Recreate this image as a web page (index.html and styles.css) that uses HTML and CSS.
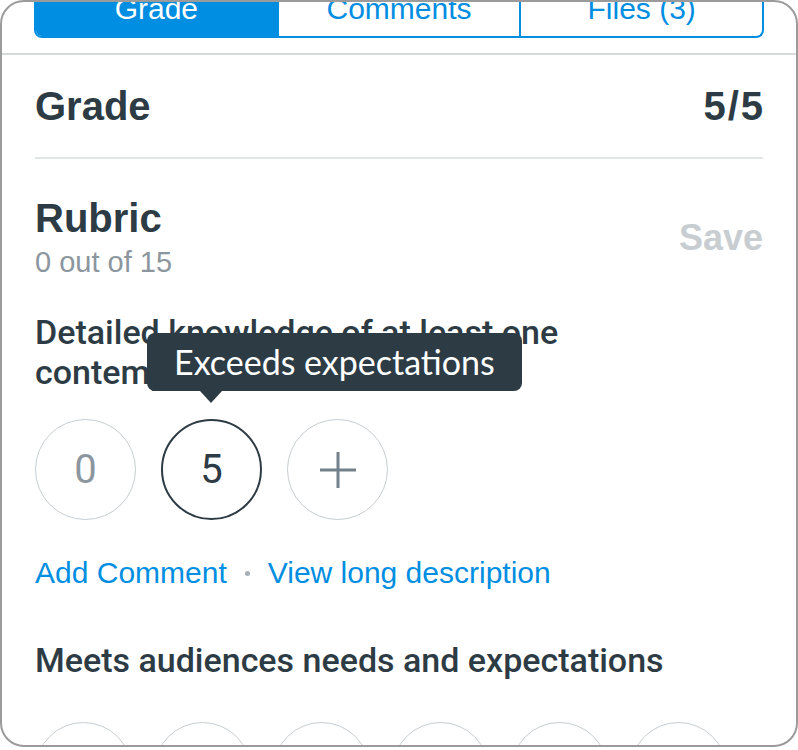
FILE: index.html
```html
<!DOCTYPE html>
<html>
<head>
<meta charset="utf-8">
<link rel="stylesheet" href="styles.css">
</head>
<body>
<div class="device">
  <div class="topbar">
    <div class="tabs">
      <div class="tab active">Grade</div>
      <div class="tab">Comments</div>
      <div class="tab">Files (3)</div>
    </div>
  </div>
  <div class="content">
    <div class="grade-row">
      <span class="h1">Grade</span>
      <span class="h1 score">5/5</span>
    </div>
    <div class="rubric-row">
      <div class="rubric-title">
        <div class="h1">Rubric</div>
        <div class="sub">0 out of 15</div>
      </div>
      <div class="save">Save</div>
    </div>
    <div class="criterion">
      <div class="crit-text">Detailed knowledge of at least one contemporary issue</div>
      <div class="ratings">
        <div class="rating">0</div>
        <div class="rating selected">5
          <div class="tooltip">Exceeds expectations</div>
        </div>
        <div class="rating plus">
          <svg width="38" height="38" viewBox="0 0 38 38"><path d="M19 1V37M1 19H37" stroke="#73818c" stroke-width="3" fill="none"/></svg>
        </div>
      </div>
      <div class="links">
        <span class="link">Add Comment</span>
        <span class="dot"></span>
        <span class="link">View long description</span>
      </div>
    </div>
    <div class="criterion second">
      <div class="crit-text">Meets audiences needs and expectations</div>
      <div class="ratings small">
        <div class="rating">0</div>
        <div class="rating">1</div>
        <div class="rating">2</div>
        <div class="rating">3</div>
        <div class="rating">4</div>
        <div class="rating">5</div>
      </div>
    </div>
  </div>
</div>
</body>
</html>
```
FILE: styles.css
```css
* { box-sizing: border-box; }
html, body { margin: 0; padding: 0; background: #fff; }
body { font-family: "Liberation Sans", Arial, sans-serif; color: #2d3b45; }
.device {
  width: 798px;
  height: 747px;
  border: 2px solid #9b9b9b;
  border-radius: 24px;
  overflow: hidden;
  position: relative;
}
.topbar {
  border-bottom: 2px solid #d6dadd;
  padding: 0 32px 15px;
  margin-top: -12px;
}
.tabs {
  display: flex;
  height: 48px;
  border: 2px solid #008ee2;
  border-top: none;
  border-radius: 0 0 8px 8px;
  overflow: hidden;
}
.tab {
  flex: 1;
  display: flex;
  align-items: center;
  justify-content: center;
  font-size: 30px;
  line-height: 34px;
  color: #008ee2;
  border-left: 2px solid #008ee2;
  padding-bottom: 8px;
}
.tab:first-child { border-left: none; }
.tab.active { background: #008ee2; color: #fff; }
.content { padding: 0 33px 0 33px; }
.h1 { font-size: 40px; font-weight: bold; color: #2d3b45; line-height: 44px; }
.score { letter-spacing: 2px; margin-right: -2px; }
.grade-row {
  display: flex;
  justify-content: space-between;
  align-items: center;
  height: 104px;
  border-bottom: 2px solid #e3e6e8;
}
.rubric-row {
  display: flex;
  justify-content: space-between;
  align-items: center;
  padding-top: 37px;
}
.sub { font-size: 29px; color: #8b969e; line-height: 34px; margin-top: 5px; }
.save { font-size: 36px; font-weight: bold; color: #c7cdd1; }
.criterion { margin-top: 33px; }
.crit-text {
  font-family: Roboto, "Liberation Sans", sans-serif;
  font-weight: 500;
  font-size: 34px;
  line-height: 40px;
  color: #2d3b45;
}
.ratings {
  display: flex;
  gap: 25px;
  margin-top: 27px;
}
.rating {
  width: 101px;
  height: 101px;
  border-radius: 50%;
  border: 1.5px solid #c7cdd1;
  display: flex;
  align-items: center;
  justify-content: center;
  font-family: Roboto, "Liberation Sans", sans-serif;
  font-size: 40px;
  color: #8b969e;
  position: relative;
  flex: none;
}
.rating.selected { border: 2px solid #2d3b45; color: #2d3b45; }
.tooltip {
  position: absolute;
  left: -16px;
  bottom: 127px;
  background: #2d3b45;
  color: #fff;
  font-family: Lato, "Open Sans", sans-serif;
  font-size: 34px;
  white-space: nowrap;
  padding: 0 27px;
  height: 58px;
  line-height: 58px;
  border-radius: 8px;
}
.tooltip::after {
  content: "";
  position: absolute;
  left: 53px;
  top: 58px;
  border: 11px solid transparent;
  border-top: 12px solid #2d3b45;
  border-bottom: none;
}
.links {
  display: flex;
  align-items: center;
  margin-top: 35px;
  height: 36px;
}
.link { font-size: 30px; color: #008ee2; }
.dot { width: 5px; height: 5px; border-radius: 50%; background: #a5afb5; margin: 0 18px; }
.second { margin-top: 49px; }
.ratings.small { gap: 22px; margin-top: 42px; }
.ratings.small .rating { width: 97px; height: 97px; }
```
